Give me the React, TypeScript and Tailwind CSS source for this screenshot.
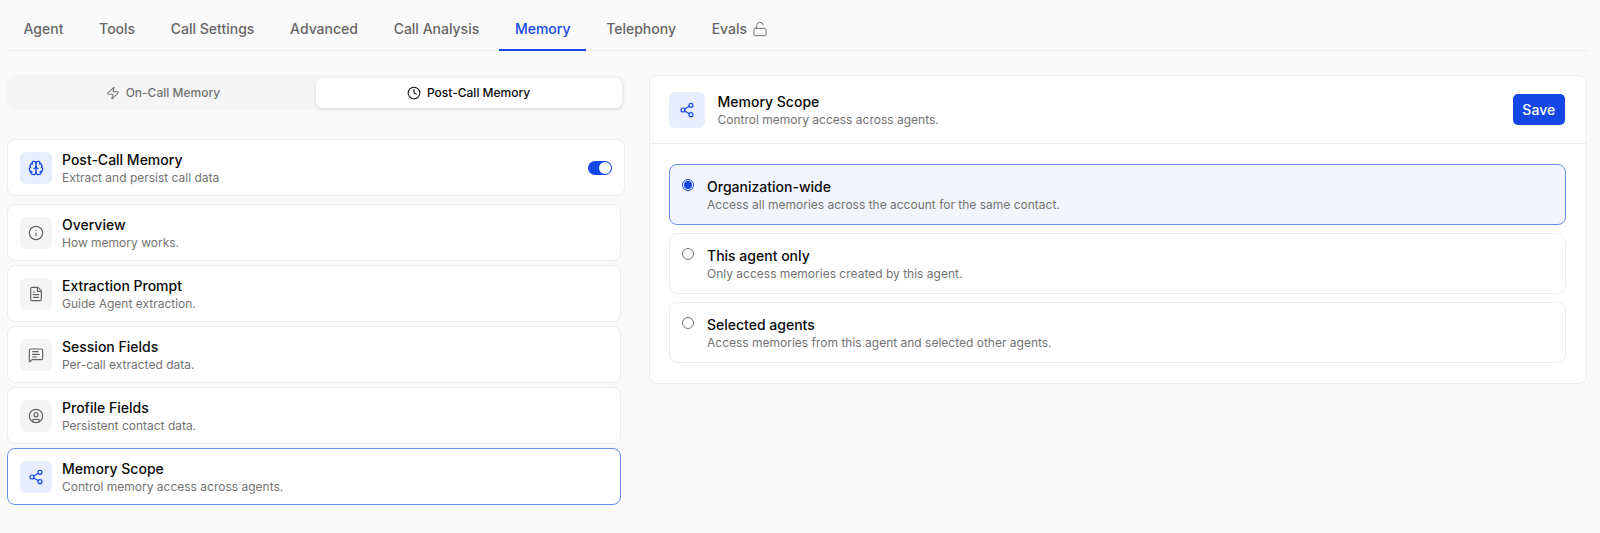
import React from "react";
import { Zap, Clock, Brain, Info, FileText, MessageSquareText, CircleUser, Share2, LockOpen } from "lucide-react";

const tabs = ["Agent", "Tools", "Call Settings", "Advanced", "Call Analysis", "Memory", "Telephony", "Evals"];

const rows = [
  { icon: Info, title: "Overview", desc: "How memory works." },
  { icon: FileText, title: "Extraction Prompt", desc: "Guide Agent extraction." },
  { icon: MessageSquareText, title: "Session Fields", desc: "Per-call extracted data." },
  { icon: CircleUser, title: "Profile Fields", desc: "Persistent contact data." },
  { icon: Share2, title: "Memory Scope", desc: "Control memory access across agents.", active: true },
];

const options = [
  { title: "Organization-wide", desc: "Access all memories across the account for the same contact.", active: true },
  { title: "This agent only", desc: "Only access memories created by this agent." },
  { title: "Selected agents", desc: "Access memories from this agent and selected other agents." },
];

function RowText({ title, desc }: { title: string; desc: string }) {
  return (
    <div className="flex flex-col">
      <span className="text-sm leading-[20px] font-medium text-[#0a0a0a]">{title}</span>
      <span className="text-xs leading-[16px] text-[#737373]">{desc}</span>
    </div>
  );
}

export default function App() {
  return (
    <div className="min-h-[533px] bg-[#fafafa] pl-[7px] pr-[13px] font-['Inter',sans-serif]">
      <div className="flex h-[51px] items-stretch gap-[3.7px] border-b border-[#ededed] pl-[0.5px]">
        {tabs.map((t) => (
          <div
            key={t}
            className={
              t === "Memory"
                ? "-mb-px flex items-center border-b-2 border-blue-700 px-4 pt-2 text-sm font-medium text-blue-700"
                : "-mb-px flex items-center gap-[5px] border-b-2 border-transparent px-4 pt-2 text-sm font-medium text-[#666666]"
            }
          >
            {t}
            {t === "Evals" && <LockOpen size={16} strokeWidth={1.5} className="text-[#737373]" />}
          </div>
        ))}
      </div>

      <div className="mt-6 flex gap-[24.5px]">
        <div className="w-[617.5px] shrink-0">
          <div className="flex h-9 rounded-lg bg-[#f5f5f5] p-[3px]">
            <div className="flex flex-1 items-center justify-center gap-1.5 rounded-md text-xs font-medium text-[#737373]">
              <Zap size={14} strokeWidth={1.75} />
              On-Call Memory
            </div>
            <div className="flex flex-1 items-center justify-center gap-1.5 rounded-md bg-white text-xs font-medium text-[#0a0a0a] shadow-[0_1px_3px_rgba(0,0,0,0.15)]">
              <Clock size={14} strokeWidth={1.75} />
              Post-Call Memory
            </div>
          </div>

          <div className="mt-7 flex h-[57px] items-center gap-2.5 rounded-lg border border-[#ededed] bg-white px-3">
            <div className="flex h-8 w-8 items-center justify-center rounded-md bg-[#e8eefd] text-blue-700">
              <Brain size={16} strokeWidth={2} />
            </div>
            <RowText title="Post-Call Memory" desc="Extract and persist call data" />
            <div className="ml-auto flex h-3.5 w-6 items-center justify-end rounded-full bg-blue-700 p-px">
              <div className="h-3 w-3 rounded-full bg-white" />
            </div>
          </div>

          <div className="mt-2 flex flex-col gap-1 pr-[3.5px]">
            {rows.map((r) => {
              const Icon = r.icon;
              return (
                <div
                  key={r.title}
                  className={
                    r.active
                      ? "flex h-[57px] items-center gap-2.5 rounded-lg border border-[#6b8cea] bg-white px-3"
                      : "flex h-[57px] items-center gap-2.5 rounded-lg border border-[#ededed] bg-white px-3"
                  }
                >
                  <div
                    className={
                      r.active
                        ? "flex h-8 w-8 items-center justify-center rounded-md bg-[#e8eefd] text-blue-700"
                        : "flex h-8 w-8 items-center justify-center rounded-md bg-[#f5f5f5] text-[#636363]"
                    }
                  >
                    <Icon size={16} strokeWidth={1.75} />
                  </div>
                  <RowText title={r.title} desc={r.desc} />
                </div>
              );
            })}
          </div>
        </div>

        <div className="min-w-0 flex-1 self-start rounded-lg border border-[#ededed] bg-white">
          <div className="flex h-[68px] items-center gap-[12.5px] border-b border-[#ededed] pl-[19px] pr-[21px]">
            <div className="flex h-9 w-9 items-center justify-center rounded-md bg-[#e8eefd] text-blue-700">
              <Share2 size={16} strokeWidth={1.75} />
            </div>
            <RowText title="Memory Scope" desc="Control memory access across agents." />
            <button className="ml-auto h-[31px] w-[52.5px] rounded-[5px] bg-blue-700 text-sm font-medium text-white">Save</button>
          </div>
          <div className="flex flex-col gap-2 pl-[19px] pr-5 pt-5 pb-[19.5px]">
            {options.map((o) => (
              <div
                key={o.title}
                className={
                  o.active
                    ? "flex h-[61px] items-start gap-[13px] rounded-lg border border-[#6b8cea] bg-[#f3f5fe] px-3 pt-3"
                    : "flex h-[61px] items-start gap-[13px] rounded-lg border border-[#ededed] bg-white px-3 pt-3"
                }
              >
                <div
                  className={
                    o.active
                      ? "mt-[2px] flex h-3 w-3 items-center justify-center rounded-full border border-blue-700 bg-white"
                      : "mt-[2px] h-3 w-3 rounded-full border border-[#737373] bg-white"
                  }
                >
                  {o.active && <div className="h-2 w-2 rounded-full bg-blue-700" />}
                </div>
                <RowText title={o.title} desc={o.desc} />
              </div>
            ))}
          </div>
        </div>
      </div>
    </div>
  );
}
